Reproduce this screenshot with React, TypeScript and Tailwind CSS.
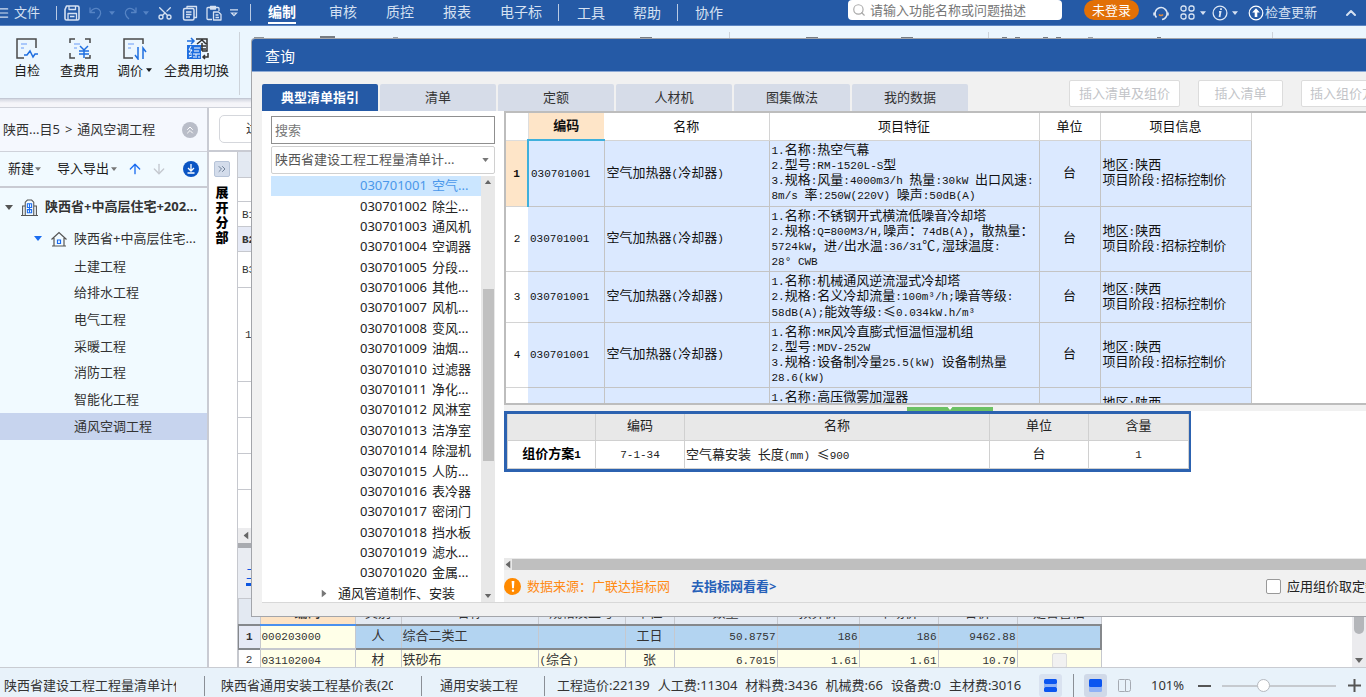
import clsx from "clsx"
import {
    ArrowDown,
    ArrowUp,
    ChevronsRight,
    ChevronsUp,
    ChevronUp,
    Menu,
    Scissors,
    Search,
} from "lucide-react"
import { ReactNode } from "react"

interface ListRow {
    id: number
    height: string
    features: string[]
}

interface MaterialRow {
    id: number
    cells: string[]
}

const menus = ["编制", "审核", "质控", "报表", "电子标"]

const projects = [
    "土建工程",
    "给排水工程",
    "电气工程",
    "采暖工程",
    "消防工程",
    "智能化工程",
    "通风空调工程",
]

const catalogue = [
    "空气...",
    "除尘...",
    "通风机",
    "空调器",
    "分段...",
    "其他...",
    "风机...",
    "变风...",
    "油烟...",
    "过滤器",
    "净化...",
    "风淋室",
    "洁净室",
    "除湿机",
    "人防...",
    "表冷器",
    "密闭门",
    "挡水板",
    "滤水...",
    "金属...",
]

const tabs = ["典型清单指引", "清单", "定额", "人材机", "图集做法", "我的数据"]

const listRows: ListRow[] = [
    {
        id: 1,
        height: "h-[66px]",
        features: [
            "1.名称:热空气幕",
            "2.型号:RM-1520L-S型",
            "3.规格:风量:4000m3/h 热量:30kW 出口风速:",
            "8m/s 率:250W(220V) 噪声:50dB(A)",
        ],
    },
    {
        id: 2,
        height: "h-[65px]",
        features: [
            "1.名称:不锈钢开式横流低噪音冷却塔",
            "2.规格:Q=800M3/H,噪声：74dB(A)，散热量：",
            "5724kW，进/出水温:36/31℃,湿球温度:",
            "28° CWB",
        ],
    },
    {
        id: 3,
        height: "h-[51px]",
        features: [
            "1.名称:机械通风逆流湿式冷却塔",
            "2.规格:名义冷却流量:100m³/h;噪音等级:",
            "58dB(A);能效等级:≤0.034kW.h/m³",
        ],
    },
    {
        id: 4,
        height: "h-[65px]",
        features: [
            "1.名称:MR风冷直膨式恒温恒湿机组",
            "2.型号:MDV-252W",
            "3.规格:设备制冷量25.5(kW) 设备制热量",
            "28.6(kW)",
        ],
    },
]

const materialHeads = [
    "类别",
    "名称",
    "规格及型号",
    "单位",
    "数量",
    "预算价",
    "市场价",
    "合价",
    "是否暂估",
]

const materials: MaterialRow[] = [
    {
        id: 1,
        cells: ["000203000", "人", "综合二类工", "", "工日", "50.8757", "186", "186", "9462.88"],
    },
    {
        id: 2,
        cells: ["031102004", "材", "铁砂布", "(综合)", "张", "6.7015", "1.61", "1.61", "10.79"],
    },
]

// Half-width runs are set in a smaller mono face so two of them fill one CJK cell
function GridText({ children }: { children: string }) {
    return (
        <span className="block h-[15px] font-['Liberation_Mono','Noto_Sans_CJK_SC',monospace] leading-[15px] whitespace-pre">
            {children.split(/([\x20-\x7e³°]+)/).map((part, idx) =>
                idx % 2 ? (
                    <span key={idx} className="text-[11px] leading-none">
                        {part}
                    </span>
                ) : part.includes("≤") ? (
                    <span key={idx} className="font-['Noto_Sans_CJK_SC',sans-serif] leading-none">
                        {part}
                    </span>
                ) : (
                    part
                )
            )}
        </span>
    )
}

function Caret({ className }: { className?: string }) {
    return (
        <svg viewBox="0 0 8 5" className={clsx("shrink-0", className)} aria-hidden="true">
            <path d="M0 0h8L4 5z" fill="currentColor" />
        </svg>
    )
}

function Divider({ className }: { className?: string }) {
    return <span className={clsx("w-px shrink-0", className)} />
}

function ToolIcon({ children }: { children: ReactNode }) {
    return (
        <svg
            viewBox="0 0 16 16"
            className="size-4 shrink-0"
            fill="none"
            stroke="currentColor"
            strokeWidth="1.300"
            strokeLinejoin="round"
        >
            {children}
        </svg>
    )
}

function TopBar() {
    return (
        <header className="flex h-[26px] shrink-0 items-center overflow-hidden border-b border-[#5d86c3] bg-[#255aa6] text-[#d5e1f2]">
            <button className="flex items-center gap-1 text-[13px]">
                <Menu className="-ml-1 size-[14px]" strokeWidth={2} />
                文件
            </button>
            <Divider className="mr-[7px] ml-4 h-[14px] bg-[#b9cae4]" />
            <div className="flex items-center">
                <button aria-label="保存">
                    <ToolIcon>
                        <path d="M2.500 1h11A1.500 1.500 0 0 1 15 2.500v11a1.500 1.500 0 0 1-1.500 1.500h-11A1.500 1.500 0 0 1 1 13.500v-9z" strokeWidth="1.600" />
                        <path d="M5 1v3.500h6.500V1M4 15V8.500h8.500V15M6 11.500h4.500" />
                    </ToolIcon>
                </button>
                <button aria-label="撤销" className="ml-2 flex items-center gap-[5px] text-[#5583c4]">
                    <ToolIcon>
                        <path d="M2 2.500v5h5M2.500 7c2-3.500 6-4.500 8.500-2.500s2.500 6-2 9.500" />
                    </ToolIcon>
                    <Caret className="h-[4px] w-[6px]" />
                </button>
                <button aria-label="重做" className="ml-[7px] flex items-center gap-[5px] text-[#5583c4]">
                    <ToolIcon>
                        <path d="M14 2.500v5H9M13.500 7c-2-3.500-6-4.500-8.500-2.500s-2.500 6 2 9.500" />
                    </ToolIcon>
                    <Caret className="h-[4px] w-[6px]" />
                </button>
                <button aria-label="剪切" className="ml-2">
                    <Scissors className="size-4 rotate-270" />
                </button>
                <button aria-label="复制" className="ml-[9px]">
                    <ToolIcon>
                        <path d="M5 3.500V1.500h9.500v11h-2.500" />
                        <rect x="1.500" y="3.500" width="10.500" height="11.500" rx="1.500" strokeWidth="1.500" />
                        <path d="M4 7h5.500M4 9.500h5.500M4 12h4" />
                    </ToolIcon>
                </button>
                <button aria-label="粘贴" className="ml-2">
                    <ToolIcon>
                        <path d="M6 14.500H2a1 1 0 0 1-1-1v-10a1 1 0 0 1 1-1h10a1 1 0 0 1 1 1V6M4.500 4V1.500h5V4z" />
                        <path d="M7.500 7h5l2.500 2.500V15H7.500zM9.500 10h3M9.500 12.500h3.500" />
                    </ToolIcon>
                </button>
                <button aria-label="更多" className="ml-2">
                    <svg viewBox="0 0 8 8" className="h-2 w-2" fill="none" stroke="currentColor">
                        <path d="M0 .8h8M1.500 4h5L4 6.700z" strokeWidth="1.200" />
                    </svg>
                </button>
            </div>
            <Divider className="mr-[17px] ml-3 h-[17px] bg-[#b9cae4]" />
            <nav className="flex shrink-0 items-center gap-[29px] text-sm">
                {menus.map((menu, idx) => (
                    <button
                        key={menu}
                        className={clsx(
                            "h-[22px] border-b-2 leading-[18px]",
                            idx === 0
                                ? "mr-1 border-white font-bold text-white"
                                : "border-transparent"
                        )}
                    >
                        {menu}
                    </button>
                ))}
            </nav>
            <Divider className="mr-[18px] ml-4 h-[17px] bg-[#b9cae4]" />
            <nav className="flex shrink-0 gap-7 text-sm">
                <button>工具</button>
                <button>帮助</button>
            </nav>
            <Divider className="mr-[17px] ml-4 h-[17px] bg-[#b9cae4]" />
            <button className="shrink-0 text-sm">协作</button>

            <div className="ml-auto flex shrink-0 items-center pr-[7px]">
                <label className="mb-[6px] flex h-5 w-[214px] items-center gap-1 rounded-[4px] bg-white px-1">
                    <Search className="size-[14px] shrink-0 text-[#a9a9a9]" />
                    <input
                        type="text"
                        aria-label="搜索功能"
                        placeholder="请输入功能名称或问题描述"
                        className="w-full min-w-0 text-[13px] leading-5 outline-none placeholder:text-[#777]"
                    />
                </label>
                <button className="mb-[6px] ml-[22px] h-5 w-[55px] rounded-full bg-[#e27006] text-[13px] leading-5 text-white">
                    未登录
                </button>
                <button aria-label="客服" className="ml-[14px]">
                    <svg viewBox="0 0 16 16" className="size-4" fill="none" stroke="#dbe6f5" strokeWidth="1.500">
                        <path d="M3.500 12.500A6 6 0 1 1 14 9.500c-.5 2.500-2 4.500-5 5M1 7.500v3M15 7.500v3" />
                        <path d="M6 9.500c1 1.400 3 1.400 4 0" stroke="#e08a3c" />
                    </svg>
                </button>
                <button aria-label="应用" className="ml-[11px] flex items-center gap-[5px]">
                    <svg viewBox="0 0 15 15" className="size-[15px]" fill="none" stroke="#dbe6f5" strokeWidth="1.300">
                        <rect x="1" y="1" width="5" height="5" rx="2" />
                        <rect x="9" y="1" width="5" height="5" rx="2" />
                        <rect x="1" y="9" width="5" height="5" rx="2" />
                        <rect x="9" y="9" width="5" height="5" rx="2" />
                    </svg>
                    <Caret className="h-[4px] w-[6px]" />
                </button>
                <button aria-label="信息" className="ml-[6px] flex items-center gap-1">
                    <svg viewBox="0 0 16 16" className="size-4" fill="none" stroke="#dbe6f5">
                        <circle cx="8" cy="8" r="6.900" strokeWidth="1.300" />
                        <path d="M7 6.800h1.500L7.500 12M9 3.300v1.700" strokeWidth="1.800" />
                    </svg>
                    <Caret className="h-[4px] w-[6px]" />
                </button>
                <button className="ml-[10px] flex items-center gap-px text-[13px]">
                    <svg viewBox="0 0 16 16" className="size-4" fill="none" stroke="white">
                        <circle cx="8" cy="8" r="6.800" strokeWidth="1.200" />
                        <path d="M8 3.200 4.200 7.600h2.500V12h2.600V7.600h2.500z" fill="white" stroke="none" />
                    </svg>
                    检查更新
                </button>
                <button aria-label="收起" className="ml-[26px]">
                    <ChevronUp className="size-4" strokeWidth={3} />
                </button>
            </div>
        </header>
    )
}

function RibbonButton({ label, children }: { label: ReactNode; children: ReactNode }) {
    return (
        <button className="flex flex-col items-center text-[13px] leading-5 whitespace-nowrap text-[#1c1c1c]">
            <svg viewBox="0 0 24 24" className="h-6 w-6" fill="none" strokeWidth="1.500">
                {children}
            </svg>
            {label}
        </button>
    )
}

function Ribbon() {
    return (
        <div className="flex h-[82px] shrink-0 flex-col">
            <div className="flex h-[73px] overflow-hidden border-b border-[#c3c8d4] bg-[#ebf6fe]">
                <div className="flex items-start pt-[10px] pl-[14px]">
                    <RibbonButton label="自检">
                        <path d="M21 12V3H2v19h7" stroke="#4a4a4a" />
                        <path d="M6 8h6M6 12h3" stroke="#a9c8fb" strokeWidth="2" />
                        <path d="M9 19h3l3-4 3 6 2-3h3" stroke="#1f6fe0" />
                    </RibbonButton>
                    <div className="ml-5">
                        <RibbonButton label="查费用">
                            <path d="M2 7V3h5M17 3h5v4M2 17v5h5M17 22h5v-3" stroke="#4a4a4a" />
                            <path d="M6 8h6M6 12h3" stroke="#a9c8fb" strokeWidth="2" />
                            <path d="m12 10 4 4 4-4M16 14v8M11 15h10M11 18h10" stroke="#1f6fe0" />
                        </RibbonButton>
                    </div>
                    <div className="ml-[18px]">
                        <RibbonButton
                            label={
                                <span className="flex items-center gap-[3px]">
                                    调价
                                    <Caret className="h-[4px] w-[6px]" />
                                </span>
                            }
                        >
                            <path d="M20 8V3H1v19h9" stroke="#4a4a4a" />
                            <path d="M5 8h6M5 12h3" stroke="#a9c8fb" strokeWidth="2" />
                            <path d="M15 11v12l-3-4M20 23V12l3 4" stroke="#1f6fe0" />
                        </RibbonButton>
                    </div>
                    <div className="ml-3">
                        <RibbonButton label="全费用切换">
                            <path d="M11 3h11v12h-5M12 8l5-4 4 4M13 10h8M17 7v8M13 13h8" stroke="#333" />
                            <path d="M2 5h6M6 2l3 3-3 3" stroke="#1f6fe0" />
                            <rect x="2" y="9" width="14" height="14" fill="#1f6fe0" />
                            <path d="m6 10-2 4h3l-3 4h3M4 21l3-1M9 12h6M9 15h5M8 18h7M11 18v4M9 20v2M14 20v2" stroke="#fff" strokeWidth="1" />
                            <path d="M23 17v4h-5M20 19l-2 2 2 2" stroke="#333" />
                        </RibbonButton>
                    </div>
                </div>
                <Divider className="mt-[6px] ml-[10px] h-[63px] bg-[#cdd3da]" />
                {/* groups whose icons only peek out above the dialog */}
                <div className="flex flex-1 items-start">
                    <span className="mt-[11px] ml-[14px] h-5 w-[10px] bg-[#8c9298]" />
                    <span className="mt-[10px] ml-[56px] h-5 w-[15px] bg-[#777c82]" />
                    <span className="mt-[11px] ml-[58px] h-5 w-[5px] bg-[#9aa0a6]" />
                    <span className="mt-[11px] ml-[242px] h-5 w-[12px] bg-[#777c82]" />
                    <Divider className="mt-[6px] ml-[77px] h-[63px] bg-[#cdd3da]" />
                    <span className="mt-[11px] ml-[76px] h-5 w-[12px] bg-[#777c82]" />
                    <span className="mt-[11px] ml-[83px] h-5 w-[12px] bg-[#777c82]" />
                    <Divider className="mt-[6px] ml-[75px] h-[63px] bg-[#cdd3da]" />
                    <span className="mt-[11px] ml-[13px] h-5 w-[5px] bg-[#777c82]" />
                    <span className="mt-[11px] ml-[8px] h-5 w-[5px] bg-[#777c82]" />
                    <span className="mt-[11px] ml-[23px] h-5 w-[5px] bg-[#777c82]" />
                    <span className="mt-[11px] ml-[8px] h-5 w-[5px] bg-[#777c82]" />
                    <span className="mt-[11px] ml-[27px] h-5 w-[5px] bg-[#9aa0a6]" />
                    <span className="mt-[11px] ml-[64px] h-5 w-[4px] bg-[#777c82]" />
                    <Divider className="mt-[6px] ml-[111px] h-[63px] bg-[#cdd3da]" />
                </div>
            </div>
            <div className="flex-1 border-b border-[#cfd2da] bg-linear-to-b from-[#d3d6e0] to-[#f5f5f9] to-50%" />
        </div>
    )
}

function Sidebar() {
    return (
        <aside className="flex w-[209px] shrink-0 flex-col border-r-2 border-[#c9cbd3] bg-[#f1faff] text-[13px] text-[#333]">
            <div className="flex h-11 shrink-0 items-center border-b border-[#cfd2da] bg-[#f5f8fe] pr-[9px] pl-[3px] whitespace-nowrap">
                <span>陕西...目5</span>
                <span className="mx-[5px]">&gt;</span>
                <span>通风空调工程</span>
                <button
                    aria-label="收起"
                    className="ml-auto flex size-4 items-center justify-center rounded-full bg-[#b9bdc8] text-white"
                >
                    <ChevronsUp className="size-3" />
                </button>
            </div>
            <div className="flex h-9 shrink-0 items-center border-b-2 border-[#c9cbd3] pr-2 pl-2 text-[#1c1c1c]">
                <button className="flex items-center gap-px whitespace-nowrap">
                    新建
                    <Caret className="h-[4px] w-[6px] text-[#777]" />
                </button>
                <button className="ml-4 flex items-center gap-[2px] whitespace-nowrap">
                    导入导出
                    <Caret className="h-[4px] w-[6px] text-[#777]" />
                </button>
                <button aria-label="上移" className="ml-[10px] text-[#1a6cf0]">
                    <ArrowUp className="size-4" />
                </button>
                <button aria-label="下移" className="ml-2 text-[#c4c8cf]">
                    <ArrowDown className="size-4" />
                </button>
                <button aria-label="下载" className="ml-auto">
                    <svg viewBox="0 0 16 16" className="size-4" fill="none" stroke="white" strokeWidth="1.300">
                        <circle cx="8" cy="8" r="8" fill="#0b55c4" stroke="none" />
                        <path d="M8 3v6.500M5 7l3 3 3-3M4.500 12h7" />
                    </svg>
                </button>
            </div>
            <div className="flex h-9 shrink-0 items-center pt-[2px] pl-[5px] font-bold whitespace-nowrap">
                <Caret className="h-[5px] w-2 text-[#555]" />
                <svg viewBox="0 0 16 16" className="ml-2 size-[17px] shrink-0" fill="none" stroke="#555">
                    <path d="M0 15.500h16M1.500 15V6.500H4M12 6.500h2.500V15M4 15V3l2-2h4l2 2v12" />
                    <path d="M6 4.500h4V8H6zM6 10h4v3H6zM8 4.500V13" stroke="#1a6cf0" />
                </svg>
                <span className="ml-[7px]">陕西省+中高层住宅+202...</span>
            </div>
            <div className="flex h-[29px] shrink-0 items-center pl-[34px] whitespace-nowrap">
                <Caret className="h-[5px] w-2 text-[#1a6cf0]" />
                <svg viewBox="0 0 16 16" className="ml-[9px] size-4 shrink-0" fill="none" stroke="#555" strokeWidth="1.200">
                    <path d="M.5 8.500 8 1.500l7.500 7M3 7v8h10V7M1 15h14" />
                    <path d="M6.500 9h3v3.500h-3z" stroke="#1a6cf0" />
                </svg>
                <span className="ml-[7px]">陕西省+中高层住宅...</span>
            </div>
            <ul className="grid h-[187px] shrink-0 auto-rows-fr">
                {projects.map((name, idx) => (
                    <li
                        key={name}
                        className={clsx(
                            "flex items-center pl-[74px]",
                            idx === projects.length - 1 && "bg-[#c7d4ee]"
                        )}
                    >
                        {name}
                    </li>
                ))}
            </ul>
        </aside>
    )
}

// Quota grid and the materials table, mostly behind the dialog
function Workspace() {
    return (
        <main className="flex min-w-0 flex-1 flex-col bg-white text-[13px] text-[#333]">
            <div className="flex h-11 shrink-0 items-center border-b-2 border-[#c9cbd3] pl-[10px]">
                <button className="h-7 w-[72px] rounded-[5px] border border-[#d5d7dc] pl-[26px] text-left">
                    过滤
                </button>
            </div>
            <div className="flex min-h-0 flex-1">
                <div className="flex w-7 shrink-0 flex-col items-center pt-[9px] pr-[2px]">
                    <button
                        aria-label="展开"
                        className="flex size-4 items-center justify-center rounded-[2px] border border-[#b7c4d8] bg-[#d3dceb] text-[#6f8097]"
                    >
                        <ChevronsRight className="size-3" />
                    </button>
                    <strong className="mt-2 w-[14px] text-center text-[13px] leading-[15px] font-black text-black">
                        展开分部
                    </strong>
                </div>
                <div className="flex min-w-0 flex-1 flex-col border-l border-[#c6c8ce]">
                    <div className="h-[26px] shrink-0 border-b border-[#c6c8ce] bg-[#e3e9f2]" />
                    <div className="h-[24px] shrink-0 border-b border-[#c6c8ce]" />
                    <div className="flex h-[25px] shrink-0 items-center border-b border-[#c6c8ce] pl-1">
                        <GridText>B1</GridText>
                    </div>
                    <div className="flex h-[25px] shrink-0 items-center border-b border-[#c6c8ce] bg-[#e6eaf6] pl-1 font-bold">
                        <GridText>B2</GridText>
                    </div>
                    <div className="flex h-9 shrink-0 items-center border-b border-[#c6c8ce] pl-1">
                        <GridText>B3</GridText>
                    </div>
                    <div className="flex h-[94px] shrink-0 items-center border-b border-[#c6c8ce] pl-[7px]">
                        <GridText>1</GridText>
                    </div>
                    <div className="h-9 shrink-0 border-b border-[#c6c8ce]" />
                    <div className="h-9 shrink-0 border-b border-[#c6c8ce]" />
                    <div className="h-9 shrink-0 border-b border-[#c6c8ce]" />
                    <div className="min-h-0 flex-1" />
                    <div className="flex h-[15px] shrink-0 items-center bg-[#ececee] pl-1 text-[#666]">
                        <Caret className="h-[5px] w-2 rotate-90" />
                    </div>
                    <div className="h-[5px] shrink-0 bg-[#a9abb0]" />
                    <div className="flex h-[50px] shrink-0 items-center bg-[#e9ecf2] pl-2 text-[#0b55e0]">
                        <span className="border-b-[3px] border-[#0b55e0] pt-1">工料机显示</span>
                    </div>
                    <div className="flex h-[69px] shrink-0 overflow-hidden">
                        <table className="-ml-px w-[863px] shrink-0 table-fixed border-collapse self-start text-center">
                            <colgroup>
                                <col className="w-[22px]" />
                                <col className="w-[95px]" />
                                <col className="w-[46px]" />
                                <col className="w-[137px]" />
                                <col className="w-[87px]" />
                                <col className="w-[49px]" />
                                <col className="w-[103px]" />
                                <col className="w-[82px]" />
                                <col className="w-[79px]" />
                                <col className="w-[79px]" />
                                <col className="w-[84px]" />
                            </colgroup>
                            <thead>
                                <tr className="h-[26px] bg-[#e3e9f2]">
                                    <th className="border border-[#c6c8ce]" />
                                    <th className="border border-[#c6c8ce] border-b-2 border-b-[#4a90ee] bg-[#fde3c4] pt-[5px]">
                                        <GridText>编码</GridText>
                                    </th>
                                    {materialHeads.map((head) => (
                                        <th key={head} className="border border-[#c6c8ce] pt-[5px] font-normal">
                                            <GridText>{head}</GridText>
                                        </th>
                                    ))}
                                </tr>
                            </thead>
                            <tbody>
                                {materials.map((row, r) => (
                                    <tr
                                        key={row.id}
                                        className={clsx(
                                            r === 0
                                                ? "h-6 border-2 border-[#85888c] bg-[#b3d4f1]"
                                                : "h-[22px] bg-[#ffffe8]"
                                        )}
                                    >
                                        <td
                                            className={clsx(
                                                "border border-[#c6c8ce]",
                                                r === 0 ? "bg-[#e6eaf6] font-bold" : "bg-white"
                                            )}
                                        >
                                            <GridText>{String(row.id)}</GridText>
                                        </td>
                                        {row.cells.map((cell, c) => (
                                            <td
                                                key={c}
                                                className={clsx(
                                                    "border-x border-[#c6c8ce] px-px",
                                                    c > 4 && "text-right",
                                                    (c === 0 || c === 2 || c === 3) && "text-left",
                                                    r === 0 &&
                                                        c === 0 &&
                                                        "border-2 border-[#85888c] border-l-[#4a90ee] bg-[#ffffe8]"
                                                )}
                                            >
                                                <GridText>{cell}</GridText>
                                            </td>
                                        ))}
                                        <td className="border-x border-[#c6c8ce]">
                                            {r === 1 && (
                                                <input
                                                    type="checkbox"
                                                    aria-label="是否暂估"
                                                    className="mx-auto block size-[15px] appearance-none rounded-[2px] border border-[#ddd] bg-[#f1f1f1]"
                                                />
                                            )}
                                        </td>
                                    </tr>
                                ))}
                            </tbody>
                        </table>
                        <div className="ml-auto flex w-[14px] shrink-0 flex-col items-center justify-between bg-[#ebebee] pb-1">
                            <span className="h-9 w-[10px] rounded-b-[5px] bg-[#b4b6ba]" />
                            <Caret className="h-[5px] w-2 text-[#666]" />
                        </div>
                    </div>
                </div>
            </div>
        </main>
    )
}

function CataloguePanel() {
    return (
        <section className="flex w-[242px] shrink-0 flex-col overflow-hidden border-b border-[#d8d8d8] bg-white pt-[5px] pr-[9px] pl-[9px] text-[13px]">
            <input
                type="text"
                aria-label="搜索"
                placeholder="搜索"
                className="h-7 shrink-0 border border-[#8f8f8f] px-[3px] outline-none placeholder:text-[#777]"
            />
            <div className="relative mt-[2px] h-7 shrink-0">
                <select
                    aria-label="清单库"
                    className="h-full w-full appearance-none rounded-[2px] border border-[#d0d0d0] bg-white px-[3px] text-[#555]"
                >
                    <option>陕西省建设工程工程量清单计...</option>
                </select>
                <Caret className="pointer-events-none absolute top-3 right-[6px] h-[4px] w-[7px] text-[#777]" />
            </div>
            <div className="mt-[2px] flex min-h-0 flex-1">
                <ul className="grid h-[428px] flex-1 auto-rows-fr text-[#222]">
                    {catalogue.map((name, idx) => (
                        <li
                            key={name}
                            className={clsx(
                                "flex items-center pb-px pl-[89px] leading-none whitespace-nowrap",
                                idx === 0 && "bg-[#cbe6ff] text-[#4a97ea]"
                            )}
                        >
                            <span>{`0307010${String(idx + 1).padStart(2, "0")}`}</span>
                            <span className="ml-[5px]">{name}</span>
                        </li>
                    ))}
                    <li className="flex items-center pl-[49px] leading-none whitespace-nowrap">
                        <Caret className="h-[5px] w-2 -rotate-90 text-[#777]" />
                        <span className="ml-[10px]">通风管道制作、安装</span>
                    </li>
                </ul>
                <div className="flex w-[14px] flex-col items-center bg-[#e8e8e8] pt-1 pb-1 text-[#666]">
                    <Caret className="h-[4px] w-2 rotate-180" />
                    <span className="mt-[105px] h-[172px] w-[11px] bg-[#c0c0c0]" />
                    <Caret className="mt-auto h-[4px] w-2" />
                </div>
            </div>
        </section>
    )
}

function ListTable() {
    return (
        <div className="h-[294px] shrink-0 overflow-hidden border-y-2 border-l-2 border-[#bdbdbd] bg-white">
            <table className="w-[745px] table-fixed border-collapse text-[13px] text-[#111]">
                <colgroup>
                    <col className="w-[22px]" />
                    <col className="w-[76px]" />
                    <col className="w-[165px]" />
                    <col className="w-[270px]" />
                    <col className="w-[61px]" />
                    <col className="w-[151px]" />
                </colgroup>
                <thead>
                    <tr className="h-[27px]">
                        <th className="border-r border-b border-[#ddd]" />
                        <th className="border-b-2 border-[#3fb0dc] bg-[#fee5c8]">编码</th>
                        {["名称", "项目特征", "单位", "项目信息"].map((head) => (
                            <th key={head} className="border-r border-b border-[#d4d4d4] font-normal">
                                {head}
                            </th>
                        ))}
                    </tr>
                </thead>
                <tbody>
                    {listRows.map((row) => (
                        <tr key={row.id} className={clsx("bg-[#dbe9ff]", row.height)}>
                            <td
                                className={clsx(
                                    "border-b border-[#d4d4d4] text-center",
                                    row.id === 1
                                        ? "border-r-2 border-r-[#3fb0dc] bg-[#fee5c8] font-bold"
                                        : "bg-white"
                                )}
                            >
                                <GridText>{String(row.id)}</GridText>
                            </td>
                            <td className="border-r border-b border-[#c4c4c4] px-[2px]">
                                <GridText>030701001</GridText>
                            </td>
                            <td className="border-r border-b border-[#c4c4c4] px-[2px]">
                                <GridText>空气加热器(冷却器)</GridText>
                            </td>
                            <td className="border-r border-b border-[#c4c4c4] px-[2px]">
                                {row.features.map((line) => (
                                    <GridText key={line}>{line}</GridText>
                                ))}
                            </td>
                            <td className="border-r border-b border-[#c4c4c4] text-center">
                                <GridText>台</GridText>
                            </td>
                            <td className="border-r border-b border-[#c4c4c4] px-[2px]">
                                <GridText>地区:陕西</GridText>
                                <GridText>项目阶段:招标控制价</GridText>
                            </td>
                        </tr>
                    ))}
                    <tr className="h-[51px] bg-[#dbe9ff] align-top">
                        <td className="bg-white" />
                        <td className="border-r border-[#c4c4c4]" />
                        <td className="border-r border-[#c4c4c4]" />
                        <td className="border-r border-[#c4c4c4] px-[2px] pt-[2px]">
                            <GridText>1.名称:高压微雾加湿器</GridText>
                        </td>
                        <td className="border-r border-[#c4c4c4]" />
                        <td className="border-r border-[#c4c4c4] px-[2px] pt-2">
                            <GridText>地区:陕西</GridText>
                        </td>
                    </tr>
                </tbody>
            </table>
        </div>
    )
}

function SchemeTable() {
    return (
        <div className="w-[687px] border-[3px] border-[#2c62b0]">
            <table className="w-full table-fixed border-collapse bg-white text-[13px] text-[#222]">
                <colgroup>
                    <col className="w-[88px]" />
                    <col className="w-[89px]" />
                    <col className="w-[305px]" />
                    <col className="w-[99px]" />
                    <col className="w-[100px]" />
                </colgroup>
                <thead>
                    <tr className="h-[26px] bg-[#e8e8e8]">
                        {["", "编码", "名称", "单位", "含量"].map((head) => (
                            <th key={head} className="border border-t-0 border-[#d0d0d0] font-normal">
                                <GridText>{head}</GridText>
                            </th>
                        ))}
                    </tr>
                </thead>
                <tbody>
                    <tr className="h-7 text-center">
                        <th className="border border-[#d0d0d0] text-black">
                            <GridText>组价方案1</GridText>
                        </th>
                        <td className="border border-[#d0d0d0]">
                            <GridText>7-1-34</GridText>
                        </td>
                        <td className="border border-[#d0d0d0] px-px text-left">
                            <GridText>空气幕安装 长度(mm) ≤900</GridText>
                        </td>
                        <td className="border border-[#d0d0d0]">
                            <GridText>台</GridText>
                        </td>
                        <td className="border border-[#d0d0d0]">
                            <GridText>1</GridText>
                        </td>
                    </tr>
                </tbody>
            </table>
        </div>
    )
}

function QueryDialog() {
    return (
        <div
            role="dialog"
            aria-label="查询"
            className="absolute top-[38px] right-0 bottom-[80px] left-[251px] flex flex-col overflow-hidden rounded-tl-[4px] border-t border-b border-l border-[#a3a5aa] bg-[#f1f1f1]"
        >
            <h2 className="flex h-[33px] shrink-0 items-center border-b border-[#8fabd6] bg-[#255aa6] pt-[3px] pl-[13px] text-[15px] text-white">
                查询
            </h2>
            <div className="flex h-[39px] shrink-0 pt-2 pl-[10px]">
                <div className="flex gap-[2px] pt-1" role="tablist">
                    {tabs.map((tab, idx) => (
                        <button
                            key={tab}
                            role="tab"
                            aria-selected={idx === 0}
                            className={clsx(
                                "w-[116px] shrink-0 rounded-t-[2px] text-[13px]",
                                idx === 0
                                    ? "bg-[#255aa6] font-bold text-white"
                                    : "bg-[#d6dce8] text-[#333]"
                            )}
                        >
                            {tab}
                        </button>
                    ))}
                </div>
                <div className="-mr-5 ml-auto flex h-[27px] shrink-0 gap-[18px] text-[13px] text-[#c2c4c8]">
                    <button disabled className="w-[111px] rounded-[2px] border border-[#dcdcdc] bg-white">
                        插入清单及组价
                    </button>
                    <button disabled className="w-[85px] rounded-[2px] border border-[#dcdcdc] bg-white">
                        插入清单
                    </button>
                    <button
                        disabled
                        className="w-[85px] rounded-[2px] border border-[#dcdcdc] bg-white pl-2 text-left whitespace-nowrap"
                    >
                        插入组价方案
                    </button>
                </div>
            </div>
            <div className="mb-[13px] flex min-h-0 flex-1 pl-[10px]">
                <CataloguePanel />
                <section className="flex min-w-0 flex-1 flex-col border-b border-[#d8d8d8]">
                    <ListTable />
                    <div className="flex h-[6px] shrink-0 items-end pl-[403px]">
                        <span className="flex h-1 w-[86px] items-start justify-center bg-[#6cc164]">
                            <Caret className="h-[3px] w-[6px] text-white" />
                        </span>
                    </div>
                    <div className="min-h-0 flex-1 overflow-hidden bg-white">
                        <SchemeTable />
                    </div>
                    <div className="flex h-[12px] shrink-0 items-center bg-[#e9e9e9] text-[#666]">
                        <Caret className="h-[5px] w-2 rotate-90" />
                        <span className="h-[11px] flex-1 bg-[#bfbfbf]" />
                    </div>
                    <div className="flex h-8 shrink-0 items-center overflow-hidden pt-px text-[13px] whitespace-nowrap">
                        <span className="flex size-[17px] shrink-0 items-center justify-center rounded-full bg-[#ff8a00]">
                            <svg viewBox="0 0 4 12" className="h-[11px] w-1" fill="white">
                                <path d="M.5 0h3L3 8H1z" />
                                <circle cx="2" cy="10.500" r="1.300" />
                            </svg>
                        </span>
                        <span className="ml-[6px] text-[#ff8a14]">数据来源：广联达指标网</span>
                        <a href="#" className="ml-[21px] font-bold text-[#2660b8]">
                            去指标网看看&gt;
                        </a>
                        <label className="-mr-[25px] ml-auto flex shrink-0 items-center gap-[6px] text-[#222]">
                            <input
                                type="checkbox"
                                className="size-[15px] appearance-none rounded-[2px] border border-[#999] bg-white"
                            />
                            应用组价取定数量
                        </label>
                    </div>
                </section>
            </div>
        </div>
    )
}

function StatusBar() {
    return (
        <footer className="flex h-[30px] shrink-0 items-center overflow-hidden border-t border-[#c9ccd2] bg-[#e8f2fa] pt-[6px] pl-1 text-[13px] whitespace-nowrap text-[#333]">
            <span className="w-[172px] shrink-0 overflow-hidden">陕西省建设工程工程量清单计价</span>
            <Divider className="ml-[28px] h-5 bg-[#8a8f96]" />
            <span className="ml-4 w-[172px] shrink-0 overflow-hidden">陕西省通用安装工程基价表(2025)</span>
            <Divider className="ml-[28px] h-5 bg-[#8a8f96]" />
            <span className="ml-[18px]">通用安装工程</span>
            <Divider className="ml-[26px] h-5 bg-[#8a8f96]" />
            <div className="ml-3 flex shrink-0 gap-2">
                <span>工程造价:22139</span>
                <span>人工费:11304</span>
                <span>材料费:3436</span>
                <span>机械费:66</span>
                <span>设备费:0</span>
                <span>主材费:3016</span>
            </div>
            <div className="ml-auto flex shrink-0 items-center pr-[5px]">
                <button aria-label="双栏" className="flex h-[23px] w-[23px] items-center justify-center rounded-[3px] bg-[#d9e2f0]">
                    <svg viewBox="0 0 13 13" className="size-[13px]">
                        <rect width="13" height="5" rx="1.500" fill="#0b55f0" />
                        <rect y="5" width="13" height="3" fill="#8fb1f5" />
                        <rect y="8" width="13" height="5" rx="1.500" fill="#0b55f0" />
                    </svg>
                </button>
                <Divider className="ml-[11px] h-6 bg-[#8a8f96]" />
                <button aria-label="上下布局" className="ml-[10px] flex h-[23px] w-[23px] items-center justify-center rounded-[3px] bg-[#d0d9e8]">
                    <svg viewBox="0 0 13 13" className="size-[13px]">
                        <rect width="13" height="13" rx="1.500" fill="#8fb1f5" />
                        <rect width="13" height="8" rx="1.500" fill="#0b55f0" />
                    </svg>
                </button>
                <button aria-label="左右布局" className="ml-[11px]">
                    <svg viewBox="0 0 13 13" className="size-[13px]" fill="none" stroke="#a5aab2">
                        <rect x=".5" y=".5" width="7" height="12" rx="1" />
                        <path d="M7.500.5h3a2 2 0 0 1 2 2v8a2 2 0 0 1-2 2h-3z" />
                    </svg>
                </button>
                <span className="ml-5 w-9">101%</span>
                <button aria-label="缩小" className="ml-[11px] flex h-4 w-[13px] items-center">
                    <span className="h-[2px] w-full bg-[#555]" />
                </button>
                <input
                    type="range"
                    aria-label="缩放"
                    min={0}
                    max={100}
                    defaultValue={35}
                    className="ml-[11px] h-[2px] w-[114px] appearance-none bg-[#c6cacf] [&::-webkit-slider-thumb]:size-[13px] [&::-webkit-slider-thumb]:appearance-none [&::-webkit-slider-thumb]:rounded-full [&::-webkit-slider-thumb]:border [&::-webkit-slider-thumb]:border-[#b5b9bf] [&::-webkit-slider-thumb]:bg-white"
                />
                <button aria-label="放大" className="ml-3">
                    <svg viewBox="0 0 13 13" className="size-[13px]" stroke="#555" strokeWidth="2">
                        <path d="M6.500 0v13M0 6.500h13" />
                    </svg>
                </button>
            </div>
        </footer>
    )
}

export default function App() {
    return (
        <div className="relative flex h-screen flex-col overflow-hidden bg-white font-['Noto_Sans','Noto_Sans_CJK_SC',sans-serif]">
            <TopBar />
            <Ribbon />
            <div className="flex min-h-0 flex-1">
                <Sidebar />
                <Workspace />
            </div>
            <StatusBar />
            <QueryDialog />
        </div>
    )
}
